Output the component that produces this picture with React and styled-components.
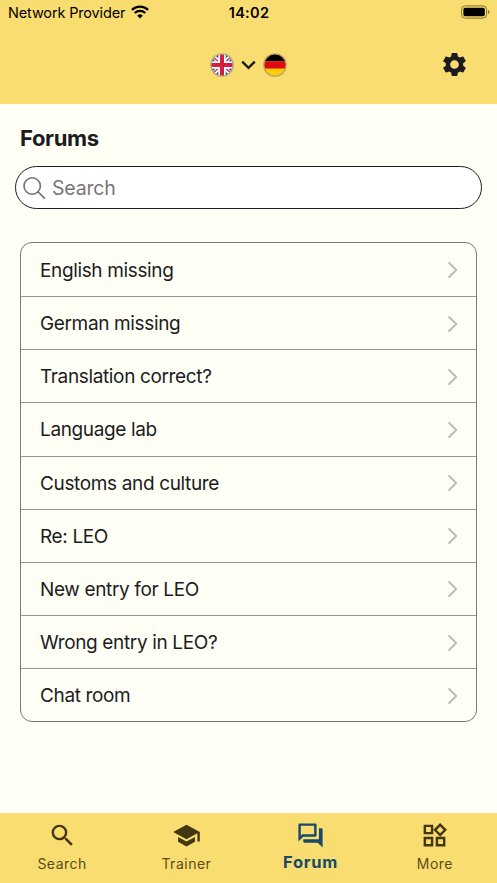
import React from "react"
import styled, { createGlobalStyle } from "styled-components"
import { MdSettings, MdSearch, MdSchool, MdOutlineForum, MdOutlineWidgets } from "react-icons/md"

const GlobalStyle = createGlobalStyle`
  * {
    box-sizing: border-box;
  }

  body {
    margin: 0;
    font-family: Inter, "Liberation Sans", sans-serif;
    color: #1c1c1e;
    background: #fffff6;
  }
`

const forums = [
  "English missing",
  "German missing",
  "Translation correct?",
  "Language lab",
  "Customs and culture",
  "Re: LEO",
  "New entry for LEO",
  "Wrong entry in LEO?",
  "Chat room"
]

const tabs = [
  { label: "Search", icon: MdSearch },
  { label: "Trainer", icon: MdSchool },
  { label: "Forum", icon: MdOutlineForum, active: true },
  { label: "More", icon: MdOutlineWidgets }
]

const StatusBar = (function() {
  const Bar = styled.div`
    display: grid;
    grid-template-columns: 1fr auto 1fr;
    align-items: center;
    height: 26px;
    padding: 0 7px 2px 8px;
    color: #000;
    font-size: 14.5px;
  `

  const Carrier = styled.div`
    display: flex;
    align-items: center;
    gap: 6px;
    letter-spacing: -0.15px;
  `

  const Time = styled.div`
    font-weight: 600;
    letter-spacing: 0.3px;
  `

  const Battery = styled.svg`
    justify-self: end;
  `

  return () => (
    <Bar>
      <Carrier>
        Network Provider
        <svg width="18" height="14" viewBox="0 0 18 14" fill="none" stroke="#000" strokeWidth="2.3">
          <path d="M0.9 4.9a11.5 11.5 0 0 1 16.2 0" />
          <path d="M3.8 8a7.4 7.4 0 0 1 10.4 0" />
          <path d="M9 13.5 6.2 10.7a4 4 0 0 1 5.6 0z" fill="#000" stroke="none" />
        </svg>
      </Carrier>
      <Time>14:02</Time>
      <Battery width="29" height="14" viewBox="0 0 29 14">
        <rect x="0.6" y="0.9" width="25" height="12.2" rx="3.6" fill="none" stroke="#7d7038" />
        <rect x="2.4" y="2.7" width="21.4" height="8.6" rx="1.8" fill="#000" />
        <path d="M27 5v4q1.5-.6 1.5-2t-1.5-2z" fill="#7d7038" />
      </Battery>
    </Bar>
  )
})()

const Flag = styled.svg`
  display: block;
  width: 24px;
  height: 24px;
`

const British = () => (
  <Flag viewBox="0 0 24 24">
    <clipPath id="round-en">
      <circle cx="12" cy="12" r="11" />
    </clipPath>
    <g clipPath="url(#round-en)">
      <path fill="#253f87" d="M0 0h24v24H0z" />
      <path stroke="#fff" strokeWidth="4.2" d="M1 1l22 22M23 1 1 23" />
      <path stroke="#d5304c" strokeWidth="1.3" d="M1 2l22 20M23 2 1 22" />
      <path stroke="#fff" strokeWidth="7.4" d="M12 0v24M0 12h24" />
      <path stroke="#d21f40" strokeWidth="4" d="M12 0v24M0 12h24" />
    </g>
    <circle cx="12" cy="12" r="11.2" fill="none" stroke="#b9ab86" strokeWidth="1.3" />
  </Flag>
)

const German = () => (
  <Flag viewBox="0 0 24 24">
    <clipPath id="round-de">
      <circle cx="12" cy="12" r="11" />
    </clipPath>
    <g clipPath="url(#round-de)">
      <path fill="#000" d="M0 0h24v8.3H0z" />
      <path fill="#dd0b0b" d="M0 8.3h24v7.4H0z" />
      <path fill="#ffce00" d="M0 15.7h24V24H0z" />
    </g>
    <circle cx="12" cy="12" r="11.2" fill="none" stroke="#b9a266" strokeWidth="1.3" />
  </Flag>
)

const Header = (function() {
  const Root = styled.header`
    flex: none;
    height: 104px;
    background: #fadd70;
  `

  const Toolbar = styled.div`
    display: grid;
    grid-template-columns: 1fr auto 1fr;
    align-items: center;
    height: 78px;
    padding: 0 28px 1px;
  `

  const Languages = styled.button`
    grid-column: 2;
    display: flex;
    align-items: center;
    gap: 7px;
    padding: 0;
    border: 0;
    background: none;
  `

  const Settings = styled.button`
    justify-self: end;
    display: flex;
    padding: 0;
    border: 0;
    color: #1c1c1e;
    background: none;
  `

  return () => (
    <Root>
      <StatusBar />
      <Toolbar>
        <Languages>
          <British />
          <svg width="15" height="10" viewBox="0 0 15 10" fill="none" stroke="#1c1c1e" strokeWidth="2.4">
            <path d="M1.2 1.7l6.3 6.2 6.3-6.2" />
          </svg>
          <German />
        </Languages>
        <Settings>
          <MdSettings size={29} />
        </Settings>
      </Toolbar>
    </Root>
  )
})()

const SearchField = (function() {
  const Field = styled.label`
    display: flex;
    align-items: center;
    gap: 7px;
    height: 43px;
    margin: 0 15px;
    padding: 0 7px;
    border: 1px solid #1c1c1e;
    border-radius: 22px;
    background: #fff;
  `

  const Input = styled.input`
    flex: auto;
    min-width: 0;
    padding: 0;
    border: 0;
    outline: 0;
    font: inherit;
    font-size: 19.5px;
    letter-spacing: -0.2px;
    background: none;

    &::placeholder {
      color: #76767a;
      opacity: 1;
    }
  `

  return () => (
    <Field>
      <svg width="22" height="22" viewBox="0 0 22 22" fill="none" stroke="#6e6e73" strokeWidth="1.6">
        <circle cx="9.2" cy="9" r="8.2" />
        <path d="M15 14.8l6.3 6.3" strokeLinecap="round" />
      </svg>
      <Input placeholder="Search" />
    </Field>
  )
})()

const ForumList = (function() {
  const List = styled.ul`
    margin: 33px 20px 0;
    padding: 0;
    border: 1px solid #77777c;
    border-radius: 12px;
    list-style: none;
  `

  const Item = styled.li`
    display: flex;
    align-items: center;
    justify-content: space-between;
    height: 53.15px;
    padding: 1px 18px 0 19px;
    font-size: 19px;
    letter-spacing: -0.36px;

    & + & {
      border-top: 1px solid #97979a;
    }
  `

  return () => (
    <List>
      {forums.map(title => (
        <Item key={title}>
          {title}
          <svg width="10" height="16" viewBox="0 0 10 16" fill="none" stroke="#bdbdb9" strokeWidth="2">
            <path d="M1.2 1l7 7-7 7" strokeLinecap="round" strokeLinejoin="round" />
          </svg>
        </Item>
      ))}
    </List>
  )
})()

const TabBar = (function() {
  const Nav = styled.nav`
    flex: none;
    display: grid;
    grid-template-columns: repeat(4, 1fr);
    height: 70px;
    background: #fadd70;
  `

  const Tab = styled.a`
    display: flex;
    flex-direction: column;
    align-items: center;
    padding-top: 8px;
    color: ${prop => (prop.$active ? "#17496b" : "#42370f")};
  `

  const Label = styled.span`
    margin-top: ${prop => (prop.$active ? 2 : 4)}px;
    font-size: ${prop => (prop.$active ? 16.5 : 14)}px;
    font-weight: ${prop => (prop.$active ? 700 : 400)};
    line-height: 20px;
    letter-spacing: ${prop => (prop.$active ? 0.75 : 0.5)}px;
    color: ${prop => (prop.$active ? "#17496b" : "#5c4d17")};
  `

  return () => (
    <Nav>
      {tabs.map(({ label, icon: Icon, active }) => (
        <Tab key={label} $active={active}>
          <Icon size={29} />
          <Label $active={active}>{label}</Label>
        </Tab>
      ))}
    </Nav>
  )
})()

const App = (function() {
  const Root = styled.div`
    display: flex;
    flex-direction: column;
    height: 883px;
    overflow: hidden;
  `

  const Main = styled.main`
    flex: 1;
    min-height: 0;
  `

  const Heading = styled.h1`
    margin: 0;
    padding: 20px 20px 14px;
    font-size: 22px;
    font-weight: 700;
    line-height: 28px;
    letter-spacing: -0.35px;
  `

  return () => (
    <Root>
      <GlobalStyle />
      <Header />
      <Main>
        <Heading>Forums</Heading>
        <SearchField />
        <ForumList />
      </Main>
      <TabBar />
    </Root>
  )
})()

export default App
